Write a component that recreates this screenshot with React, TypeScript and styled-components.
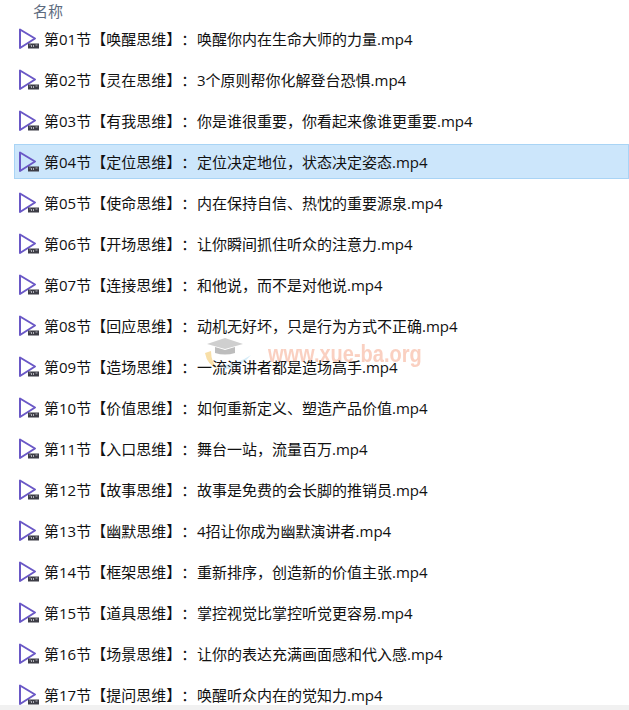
import { createGlobalStyle } from 'styled-components'
import styled from 'styled-components'

const GlobalStyle = createGlobalStyle`
  html, body {
    margin: 0;
    padding: 0;
    background: #fff;
  }
  body {
    font-family: 'Open Sans', 'Noto Sans CJK SC', sans-serif;
    text-spacing-trim: space-all;
    overflow: hidden;
  }
`

const Page = styled.div`
  position: relative;
  width: 629px;
  height: 710px;
  overflow: hidden;
  background: #fff;
`

const Header = styled.div`
  height: 21px;
  padding-left: 33px;
  font-size: 15px;
  line-height: 22px;
  color: #5d6b80;
`

const List = styled.ul`
  position: relative;
  list-style: none;
  margin: 0;
  padding: 0 0 0 14px;
  display: flex;
  flex-direction: column;
  gap: 6px;
`

const Row = styled.li<{ $selected?: boolean }>`
  height: 35px;
  box-sizing: border-box;
  display: flex;
  align-items: center;
  padding-left: 4px;
  font-size: 15px;
  color: #111;
  white-space: pre;
  background: ${p => (p.$selected ? '#cce6fb' : 'transparent')};
  box-shadow: ${p => (p.$selected ? 'inset 0 0 0 1px #a9d4f5' : 'none')};
`

const Prefix = styled.span`
  width: 153px;
  flex: none;
`

const Bottom = styled.div`
  position: absolute;
  left: 0;
  right: 0;
  bottom: 0;
  height: 5px;
  background: #f1f1f1;
`

const Watermark = styled.div`
  position: absolute;
  left: 205px;
  top: 335px;
  display: flex;
  align-items: flex-start;
  gap: 10px;
  pointer-events: none;
`

const MarkText = styled.span`
  font-family: 'Liberation Sans', sans-serif;
  font-size: 20px;
  line-height: 24px;
  margin-top: 7px;
  font-weight: 700;
  color: #fad0c1;
  transform: scaleY(1.15);
  filter: blur(0.5px);
`

const VideoIcon = () => (
  <svg width='26' height='24' viewBox='0 0 26 24' style={{ flex: 'none' }}>
    <path d='M2 2.5 L2 21 L17 11.5 Z' fill='none' stroke='#6a58c6' strokeWidth='2' strokeLinejoin='round' />
    <rect x='10' y='16.5' width='11' height='5' fill='#3d3d46' />
    <path d='M11.5 18h1M13.5 18v2M15.5 18v2M17.5 18h2' stroke='#cfcfd6' strokeWidth='0.8' />
  </svg>
)

const CapLogo = () => (
  <svg width='53' height='38' viewBox='0 0 53 38'>
    <path d='M2 9 L20 3 L38 9 L20 14 Z' fill='#cfcfcf' />
    <path d='M10 12 L20 15 L30 12 L30 18 Q20 21 10 18 Z' fill='#bdbdbd' />
    <path d='M0 18 Q2 30 14 35 Q6 28 6 16 Z' fill='#f8dfa8' />
    <path d='M18 35 Q36 33 46 20 Q34 28 20 30 Z' fill='#d6ecf8' />
  </svg>
)

const files = [
  ['第01节【唤醒思维】：', '唤醒你内在生命大师的力量.mp4'],
  ['第02节【灵在思维】：', '3个原则帮你化解登台恐惧.mp4'],
  ['第03节【有我思维】：', '你是谁很重要，你看起来像谁更重要.mp4'],
  ['第04节【定位思维】：', '定位决定地位，状态决定姿态.mp4'],
  ['第05节【使命思维】：', '内在保持自信、热忱的重要源泉.mp4'],
  ['第06节【开场思维】：', '让你瞬间抓住听众的注意力.mp4'],
  ['第07节【连接思维】：', '和他说，而不是对他说.mp4'],
  ['第08节【回应思维】：', '动机无好坏，只是行为方式不正确.mp4'],
  ['第09节【造场思维】：', '一流演讲者都是造场高手.mp4'],
  ['第10节【价值思维】：', '如何重新定义、塑造产品价值.mp4'],
  ['第11节【入口思维】：', '舞台一站，流量百万.mp4'],
  ['第12节【故事思维】：', '故事是免费的会长脚的推销员.mp4'],
  ['第13节【幽默思维】：', '4招让你成为幽默演讲者.mp4'],
  ['第14节【框架思维】：', '重新排序，创造新的价值主张.mp4'],
  ['第15节【道具思维】：', '掌控视觉比掌控听觉更容易.mp4'],
  ['第16节【场景思维】：', '让你的表达充满画面感和代入感.mp4'],
  ['第17节【提问思维】：', '唤醒听众内在的觉知力.mp4'],
]

const App = () => (
  <Page>
    <GlobalStyle />
    <Watermark>
      <CapLogo />
      <MarkText>www.xue-ba.org</MarkText>
    </Watermark>
    <Header>名称</Header>
    <List>
      {files.map(([prefix, title], i) => (
        <Row key={prefix} $selected={i === 3}>
          <VideoIcon />
          <Prefix>{prefix}</Prefix>
          <span>{title}</span>
        </Row>
      ))}
    </List>
    <Bottom />
  </Page>
)

export default App
